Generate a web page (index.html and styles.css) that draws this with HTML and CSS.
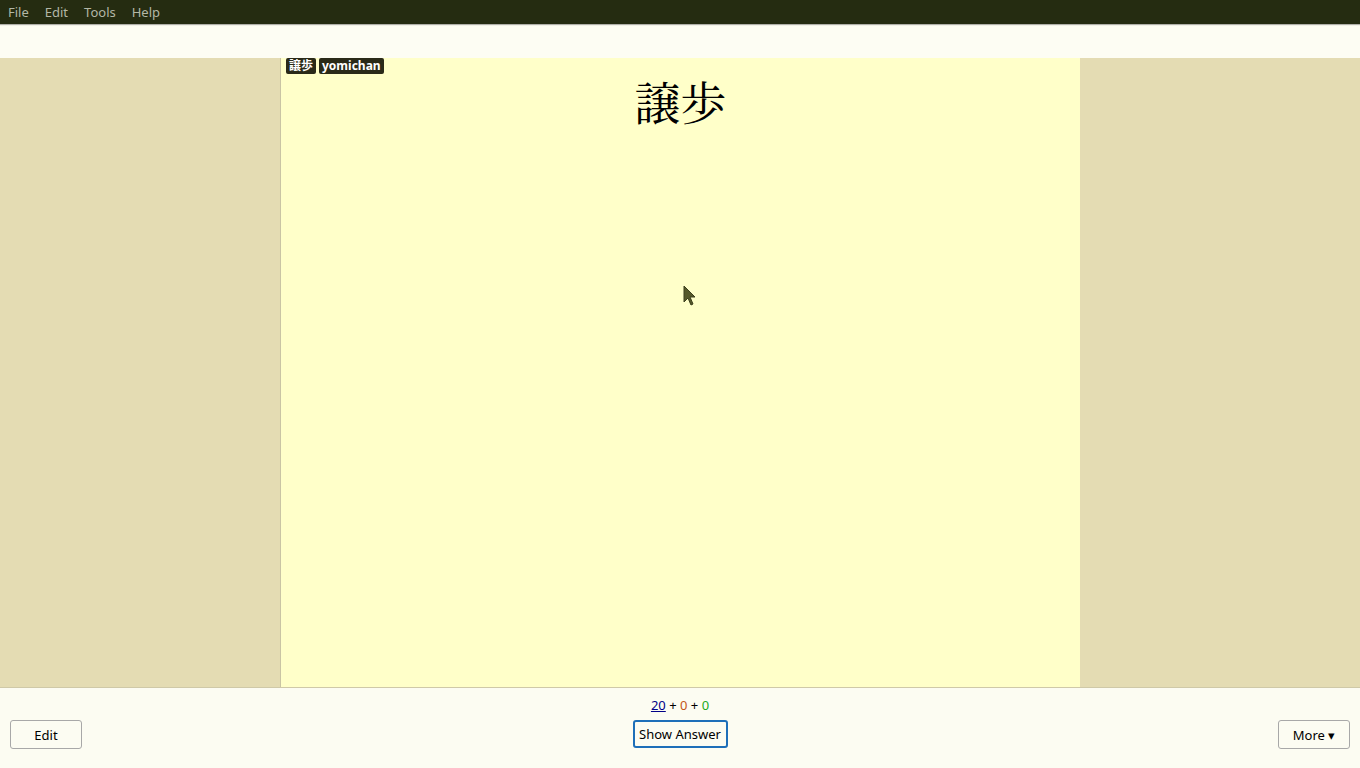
FILE: index.html
```html
<!DOCTYPE html>
<html>
<head>
<meta charset="utf-8">
<link rel="stylesheet" href="styles.css">
</head>
<body>
<div class="app">
  <div class="menubar">
    <span class="menu-item">File</span>
    <span class="menu-item">Edit</span>
    <span class="menu-item">Tools</span>
    <span class="menu-item">Help</span>
  </div>
  <div class="toolband"></div>
  <div class="main">
    <div class="card">
      <div class="tags">
        <span class="tag">譲歩</span>
        <span class="tag">yomichan</span>
      </div>
      <div class="word">譲歩</div>
      <svg class="cursor" width="14" height="22" viewBox="0 0 14 22"><path d="M1 1 L1 17 L5 13 L8 20 L10 19 L7 12 L12 12 Z" fill="#55582a" stroke="#3c3f1c" stroke-width="1"/></svg>
    </div>
  </div>
  <div class="bottom">
    <div class="counts"><span class="c-new">20</span> + <span class="c-lrn">0</span> + <span class="c-rev">0</span></div>
    <div class="buttons">
      <button class="btn">Edit</button>
      <button class="btn btn-primary">Show Answer</button>
      <button class="btn">More ▾</button>
    </div>
  </div>
</div>
</body>
</html>
```

FILE: styles.css
```css
html, body {
  margin: 0;
  padding: 0;
}
body {
  width: 1360px;
  height: 768px;
  overflow: hidden;
  font-family: "Noto Sans", "Open Sans", sans-serif;
}
.app {
  display: flex;
  flex-direction: column;
  height: 768px;
}
.menubar {
  height: 24px;
  background: #252c11;
  display: flex;
  align-items: center;
  padding-left: 8px;
  gap: 0;
  box-shadow: 0 1px 1px rgba(0,0,0,0.3);
  position: relative;
  z-index: 1;
}
.menu-item {
  color: #b3b7a6;
  font-size: 13px;
  margin-right: 16px;
  line-height: 24px;
}
.toolband {
  height: 34px;
  background: #fdfdf3;
}
.main {
  flex: 1;
  background: #e4dcb3;
  display: flex;
  justify-content: center;
  min-height: 0;
}
.card {
  width: 799px;
  background: #ffffc9;
  border-left: 1px solid #c9c4a4;
  position: relative;
}
.tags {
  display: flex;
  gap: 3px;
  padding-left: 5px;
}
.tag {
  background: #2a2a18;
  color: #ffffff;
  font-size: 12px;
  font-weight: bold;
  line-height: 16px;
  padding: 0 3px;
  border-radius: 2px;
  font-family: "Noto Sans", "Noto Sans CJK JP", sans-serif;
}
.word {
  text-align: center;
  font-family: "Noto Serif CJK JP", "Liberation Serif", "Noto Sans CJK JP", serif;
  font-size: 46px;
  line-height: 60px;
  color: #000;
  margin-top: -4px;
}
.cursor {
  position: absolute;
  left: 402px;
  top: 227px;
}
.bottom {
  height: 80px;
  border-top: 1px solid #cfc9a8;
  background: #fcfcf2;
  display: flex;
  flex-direction: column;
}
.counts {
  text-align: center;
  font-size: 13px;
  line-height: 18px;
  margin-top: 8px;
  color: #000;
}
.c-new {
  color: #000088;
  text-decoration: underline;
}
.c-lrn { color: #c35617; }
.c-rev { color: #22aa22; }
.buttons {
  display: flex;
  justify-content: space-between;
  align-items: flex-start;
  padding: 0 10px;
  margin-top: 6px;
}
.btn {
  font-family: "Noto Sans", sans-serif;
  font-size: 13px;
  height: 29px;
  min-width: 72px;
  padding: 0 6px;
  background: transparent;
  border: 1px solid #a8a8a8;
  border-radius: 3px;
  color: #000;
}
.btn-primary {
  border: 2px solid #1e6fb9;
  min-width: 95px;
  height: 28px;
  padding: 0 4px;
}
```
